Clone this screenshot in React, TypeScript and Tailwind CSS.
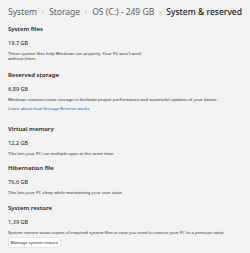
import { ChevronRight } from 'lucide-react';

const font = { fontFamily: '"Noto Sans", "Open Sans", sans-serif' };

function Crumb({ children, last }: { children: string; last?: boolean }) {
  return <span className={last ? 'text-[#1b1b1b] font-medium' : 'text-[#5f5f5f]'}>{children}</span>;
}

function Sep() {
  return <ChevronRight className="w-[5px] h-[5px] mx-[4px] text-[#7a7a7a]" strokeWidth={3} />;
}

function Heading({ children }: { children: string }) {
  return <div className="text-[6px] leading-[10px] font-semibold text-[#1b1b1b]">{children}</div>;
}

function Value({ children }: { children: string }) {
  return <div className="mt-[4px] text-[5.6px] leading-[10px] text-[#1b1b1b]">{children}</div>;
}

function Desc({ children }: { children: React.ReactNode }) {
  return <div className="mt-[3px] text-[4.3px] leading-[5px] text-[#2b2b2b]">{children}</div>;
}

export default function App() {
  return (
    <div className="w-[250px] h-[253px] bg-[#f3f3f3] px-[8px] overflow-hidden" style={font}>
      {/* Breadcrumb */}
      <div className="flex items-center h-[24px] text-[8.5px] whitespace-nowrap">
        <Crumb>System</Crumb>
        <Sep />
        <Crumb>Storage</Crumb>
        <Sep />
        <Crumb>OS (C:) - 249 GB</Crumb>
        <Sep />
        <Crumb last>System &amp; reserved</Crumb>
      </div>

      {/* System files */}
      <div>
        <Heading>System files</Heading>
        <Value>19,7 GB</Value>
        <Desc>
          These system files help Windows run properly. Your PC won't work
          <br />
          without them.
        </Desc>
      </div>

      {/* Reserved storage */}
      <div className="mt-[9px]">
        <Heading>Reserved storage</Heading>
        <Value>6,89 GB</Value>
        <Desc>Windows reserves some storage to facilitate proper performance and successful updates of your device.</Desc>
        <div className="mt-[4px] text-[4.3px] leading-[5px] text-[#005fb8]">Learn about how Storage Reserve works</div>
      </div>

      {/* Virtual memory */}
      <div className="mt-[12.5px]">
        <Heading>Virtual memory</Heading>
        <Value>12,2 GB</Value>
        <Desc>This lets your PC run multiple apps at the same time.</Desc>
      </div>

      {/* Hibernation file */}
      <div className="mt-[7px]">
        <Heading>Hibernation file</Heading>
        <Value>76,6 GB</Value>
        <Desc>This lets your PC sleep while maintaining your user state.</Desc>
      </div>

      {/* System restore */}
      <div className="mt-[8px]">
        <Heading>System restore</Heading>
        <Value>1,39 GB</Value>
        <Desc>System restore saves copies of required system files in case you need to restore your PC to a previous state.</Desc>
        <button className="mt-[2.5px] h-[11px] w-[53px] bg-white border border-[#e5e5e5] rounded-[2px] text-[4.3px] text-[#1b1b1b] flex items-center justify-center">
          Manage system restore
        </button>
      </div>
    </div>
  );
}
